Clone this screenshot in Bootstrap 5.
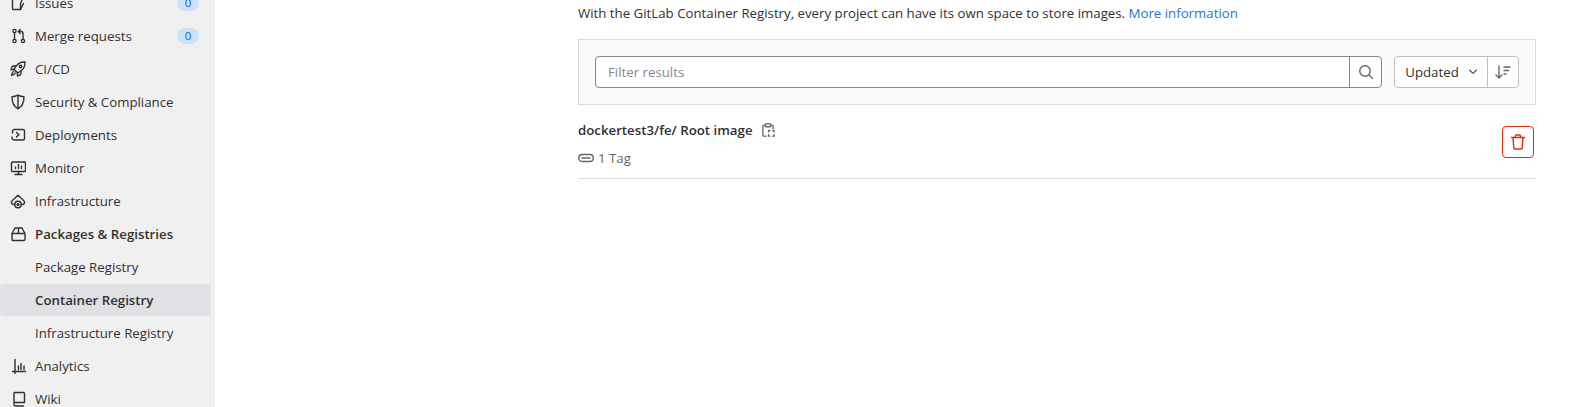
<!DOCTYPE html>
<html lang="en">

<head>
    <meta charset="utf-8">
    <meta name="viewport" content="width=device-width, initial-scale=1.0">
    <title>Container Registry</title>
    <link href="https://cdn.jsdelivr.net/npm/bootstrap@5.3.0/dist/css/bootstrap.min.css" rel="stylesheet">
    <style>
        html, body { height: 407px; overflow: hidden; }
        body { font-family: "Open Sans", "Noto Sans", sans-serif; font-size: 13.25px; color: #303030; background: #fff; }
        svg { display: block; flex: none; fill: none; stroke: currentColor; stroke-width: 1.4; stroke-linecap: round; stroke-linejoin: round; }
        .page-wrap { height: 407px; }
        .side-bar { width: 215px; background: #f0f0f0; flex: none; overflow: hidden; }
        .side-list { margin-top: -13px; padding-right: 4px; gap: 1px; }
        .side-item { height: 32px; padding-left: 10px; padding-right: 12px; gap: 9px; color: #303030; border-radius: 4px; text-decoration: none; }
        .side-label { padding-top: 2px; }
        .side-sub { padding-left: 35px; padding-top: 2px; }
        .side-item.is-head { font-weight: 600; }
        .side-item.is-active { background: #e1e1e5; font-weight: 600; }
        .side-count { background: #cbe2f9; color: #0b5cad; border-radius: 10px; width: 22px; height: 16px; font-size: 11.5px; line-height: 16px; text-align: center; }
        .main-col { padding-left: 363px; padding-right: 59px; }
        .intro-line { height: 26px; margin-top: 0; margin-bottom: 13px; line-height: 27px; }
        .intro-line a { color: #1f75cb; text-decoration: none; }
        .filter-box { height: 66px; background: #fafafa; border: 1px solid #dbdbdb; padding: 0 16px 0 16px; }
        .filter-input { height: 32px; border: 1px solid #868686; border-radius: 4px; background: #fff; }
        .filter-input input { border: 0; outline: 0; background: transparent; font: inherit; padding: 2px 12px 0; color: #303030; min-width: 0; }
        .filter-input input::placeholder { color: #89888d; opacity: 1; }
        .filter-search { width: 32px; border-left: 1px solid #868686; color: #666; }
        .sort-group { height: 32px; margin-left: 12px; border: 1px solid #bfbfbf; border-radius: 4px; background: #fff; color: #303030; }
        .sort-main { width: 93px; gap: 8px; border-right: 1px solid #bfbfbf; }
        .sort-label { padding-top: 2px; padding-left: 2px; }
        .sort-dir { width: 30px; color: #666; }
        .repo-row { height: 74px; border-bottom: 1px solid #dbdbdb; }
        .repo-name { font-weight: 600; margin-top: 15px; height: 20px; line-height: 20px; }
        .repo-copy { color: #666; }
        .repo-tag { color: #666; margin-top: 8px; height: 20px; line-height: 20px; }
        .delete-btn { width: 32px; height: 32px; margin-top: 21px; margin-right: 2px; border: 1px solid #dd2b0e; color: #dd2b0e; border-radius: 4px; background: #fff; padding: 0; }
    </style>
</head>

<body>
<div class="page-wrap d-flex">
    <aside class="side-bar">
        <nav class="side-list d-flex flex-column">
            <a class="side-item d-flex align-items-center" href="#">
                <svg width="16" height="16" viewBox="0 0 16 16"><path d="M4 1.500h9.500l-3 7v6H3.500a1 1 0 0 1-1-1v-11a1 1 0 0 1 1-1z"/><path d="M10.500 14.500l3-6"/></svg>
                <span class="side-label flex-grow-1">Issues</span><span class="side-count">0</span>
            </a>
            <a class="side-item d-flex align-items-center" href="#">
                <svg width="16" height="16" viewBox="0 0 16 16"><circle cx="4.500" cy="3" r="1.600"/><circle cx="4.500" cy="13" r="1.600"/><circle cx="13" cy="13" r="1.600"/><path d="M4.500 4.600v6.800M13 11.400V5.500a2 2 0 0 0-2-2H8.500M10.200 1.500L8.300 3.500l1.900 2"/></svg>
                <span class="side-label flex-grow-1">Merge requests</span><span class="side-count">0</span>
            </a>
            <a class="side-item d-flex align-items-center" href="#">
                <svg width="16" height="16" viewBox="0 0 16 16"><path d="M15 1c-3.600-.2-6.600 1-8.500 3.600L4 8.200l3.800 3.800 3.600-2.500C14 7.600 15.200 4.600 15 1z"/><circle cx="10.500" cy="5.500" r="1.200"/><path d="M5.500 4.800L2.300 5.300 1 8.500l3 .2M11.200 10.500l-.5 3.200-3.200 1.300-.2-3M3.800 10.500c-1.300.7-2 2-2.300 3.800 1.800-.3 3.100-1 3.800-2.300"/></svg>
                <span class="side-label">CI/CD</span>
            </a>
            <a class="side-item d-flex align-items-center" href="#">
                <svg width="16" height="16" viewBox="0 0 16 16"><path d="M8 1.200c2 1 4 1.500 6 1.500 0 5.600-1.800 10-6 12.100C3.800 12.700 2 8.300 2 2.700c2 0 4-.5 6-1.500z"/><path d="M8 2v12"/></svg>
                <span class="side-label">Security &amp; Compliance</span>
            </a>
            <a class="side-item d-flex align-items-center" href="#">
                <svg width="16" height="16" viewBox="0 0 16 16"><path d="M2.500 6V4.500a2 2 0 0 1 2-2H13A1.500 1.500 0 0 1 14.500 4v7.500A1.500 1.500 0 0 1 13 13H4.500a2.500 2.500 0 0 1-2.500-2.500V10"/><path d="M6.500 5.500L9 7.700l-2.500 2.200"/></svg>
                <span class="side-label">Deployments</span>
            </a>
            <a class="side-item d-flex align-items-center" href="#">
                <svg width="16" height="16" viewBox="0 0 16 16"><rect x="1.500" y="2" width="14" height="9.500" rx="1"/><path d="M8.500 11.500v3M5 14.500h7M5.500 8.500V7M8.500 8.500V4.500M11.500 8.500V6"/></svg>
                <span class="side-label">Monitor</span>
            </a>
            <a class="side-item d-flex align-items-center" href="#">
                <svg width="16" height="16" viewBox="0 0 16 16"><path d="M4.500 11.500H3.800c-2.600 0-3.200-3-1.200-4.200L8 2.200l5.400 5.100c2 1.200 1.400 4.200-1.200 4.200h-.7"/><circle cx="8" cy="11.500" r="3.200"/><circle cx="8" cy="11.500" r=".9"/></svg>
                <span class="side-label">Infrastructure</span>
            </a>
            <a class="side-item is-head d-flex align-items-center" href="#">
                <svg width="16" height="16" viewBox="0 0 16 16"><path d="M2 7.500h13v6a1 1 0 0 1-1 1H3a1 1 0 0 1-1-1zM2 7.500L5 2h7l3 5.500M8.500 2v5.500"/></svg>
                <span class="side-label">Packages &amp; Registries</span>
            </a>
            <a class="side-item side-sub d-flex align-items-center" href="#">Package Registry</a>
            <a class="side-item side-sub is-active d-flex align-items-center" href="#">Container Registry</a>
            <a class="side-item side-sub d-flex align-items-center" href="#">Infrastructure Registry</a>
            <a class="side-item d-flex align-items-center" href="#">
                <svg width="16" height="16" viewBox="0 0 16 16"><path d="M2.500 13.500h13M5 1.500V16M8.500 8v3.500M11 5.500v6M14 8v3.500"/></svg>
                <span class="side-label">Analytics</span>
            </a>
            <a class="side-item d-flex align-items-center" href="#">
                <svg width="16" height="16" viewBox="0 0 16 16"><path d="M4 11.500V2.500a1 1 0 0 1 1-1h8.500a1 1 0 0 1 1 1v9zM4 11.500v2a1.500 1.500 0 0 0 1.500 1.500h8"/></svg>
                <span class="side-label">Wiki</span>
            </a>
        </nav>
    </aside>

    <main class="main-col flex-grow-1">
        <p class="intro-line">With the GitLab Container Registry, every project can have its own space to store images. <a href="#">More information</a></p>

        <div class="filter-box d-flex align-items-center">
            <div class="filter-input d-flex flex-grow-1">
                <input class="flex-grow-1" type="text" placeholder="Filter results">
                <span class="filter-search d-flex align-items-center justify-content-center">
                    <svg width="16" height="16" viewBox="0 0 16 16"><circle cx="7" cy="7" r="5.250"/><path d="M11 11l3.500 3.500"/></svg>
                </span>
            </div>
            <div class="sort-group d-flex">
                <span class="sort-main d-flex align-items-center justify-content-center"><span class="sort-label">Updated</span>
                    <svg width="12" height="12" viewBox="0 0 16 16"><path d="M3.500 5.500L8 10l4.500-4.500"/></svg>
                </span>
                <span class="sort-dir d-flex align-items-center justify-content-center">
                    <svg width="16" height="16" viewBox="0 0 16 16"><path d="M4 2v12M1 11l3 3 3-3M9 3h6M9 6.500h4.500M9 10h2"/></svg>
                </span>
            </div>
        </div>

        <div class="repo-row d-flex justify-content-between">
            <div>
                <div class="repo-name d-flex align-items-center gap-2">dockertest3/fe/ Root image
                    <svg class="repo-copy" width="15" height="15" viewBox="0 0 16 16"><path d="M4.500 2.500H3a1 1 0 0 0-1 1V13a1 1 0 0 0 1 1h2.500M10.500 2.500H12a1 1 0 0 1 1 1V6"/><rect x="4.500" y="1" width="6" height="3" rx=".8"/><path d="M8 9.500V8h1.500M12.500 8H14v1.500M14 12.500V14h-1.500M9.500 14H8v-1.500"/></svg>
                </div>
                <div class="repo-tag d-flex align-items-center gap-1">
                    <svg width="16" height="16" viewBox="0 0 16 16"><rect x=".8" y="4.500" width="14.400" height="7" rx="3.200"/><path d="M4 8h8"/></svg>
                    <span>1 Tag</span>
                </div>
            </div>
            <button class="delete-btn d-flex align-items-center justify-content-center" type="button" aria-label="Delete">
                <svg width="16" height="16" viewBox="0 0 16 16"><path d="M1.500 3.500h13M5.500 3.500V2a1 1 0 0 1 1-1h3a1 1 0 0 1 1 1v1.500M3 3.500l.8 10.500a1 1 0 0 0 1 1h6.400a1 1 0 0 0 1-1L13 3.500"/></svg>
            </button>
        </div>
    </main>
</div>
</body>

</html>
